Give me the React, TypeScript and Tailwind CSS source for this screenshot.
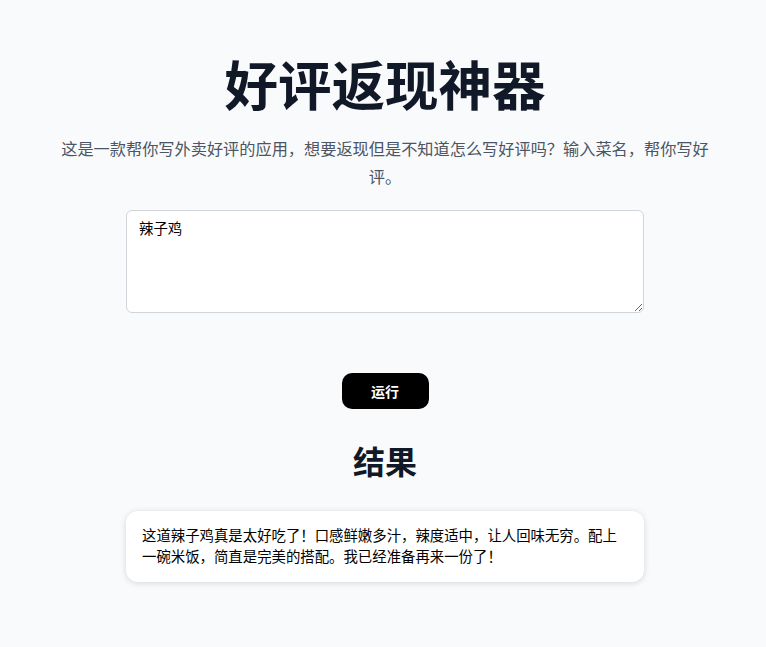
import { useState } from "react";

const FONT = {
  fontFamily: '"Inter", "Noto Sans CJK SC", sans-serif',
};

export default function App() {
  const [dish, setDish] = useState("辣子鸡");
  const result =
    "这道辣子鸡真是太好吃了！口感鲜嫩多汁，辣度适中，让人回味无穷。配上一碗米饭，简直是完美的搭配。我已经准备再来一份了！";

  return (
    <div
      className="min-h-[647px] w-full bg-[#f9fafb] flex flex-col items-center pl-[4px]"
      style={FONT}
    >
      {/* Header */}
      <h1 className="mt-[60px] text-[53.5px] leading-[54px] font-bold text-[#111827]">
        好评返现神器
      </h1>
      <p className="mt-[21px] w-[656px] text-center text-[16.2px] leading-[28px] text-[#4b5563]">
        这是一款帮你写外卖好评的应用，想要返现但是不知道怎么写好评吗？输入菜名，帮你写好评。
      </p>

      {/* Input */}
      <textarea
        value={dish}
        onChange={(e) => setDish(e.target.value)}
        className="mt-[19px] w-[518px] h-[103px] rounded-[6px] border border-[#d1d5db] bg-white px-[12px] py-[7px] text-[14.4px] leading-[21.6px] text-black outline-none"
      />

      <button className="mt-[60px] w-[87px] h-[36px] rounded-[10px] bg-black text-white text-[14px] font-bold">
        运行
      </button>

      {/* Result */}
      <h2 className="mt-[34px] text-[32px] leading-[40px] font-bold text-[#111827]">
        结果
      </h2>
      <div className="mt-[28px] w-[518px] rounded-[12px] bg-white px-[16px] py-[14.4px] shadow-[0_1px_6px_rgba(0,0,0,0.15)]">
        <p className="text-[14.4px] leading-[21px] text-black">{result}</p>
      </div>
    </div>
  );
}
